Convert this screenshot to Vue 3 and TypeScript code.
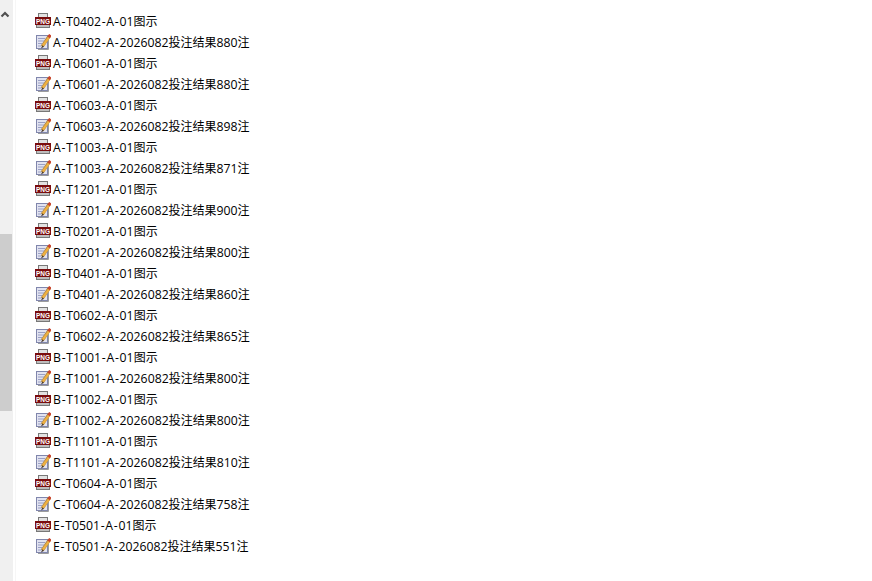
<script setup lang="ts">
interface FileRow {
  name: string
  kind: 'png' | 'txt'
}

interface NamePart {
  text: string
  cls: string
}

// code + count, each one gives an image row and a text row
const groups: [string, number][] = [
  ['A-T0402', 880],
  ['A-T0601', 880],
  ['A-T0603', 898],
  ['A-T1003', 871],
  ['A-T1201', 900],
  ['B-T0201', 800],
  ['B-T0401', 860],
  ['B-T0602', 865],
  ['B-T1001', 800],
  ['B-T1002', 800],
  ['B-T1101', 810],
  ['C-T0604', 758],
  ['E-T0501', 551]
]

const rows: FileRow[] = groups.flatMap(([code, count]): FileRow[] => [
  { name: `${code}-A-01图示`, kind: 'png' },
  { name: `${code}-A-2026082投注结果${count}注`, kind: 'txt' }
])

// hyphens and CJK runs need their own metrics to line up with the Explorer text
const splitName = (name: string): NamePart[] =>
  (name.match(/-|[\u4e00-\u9fff]+|[^-\u4e00-\u9fff]+/g) ?? []).map((text) => ({
    text,
    cls: text === '-' ? 'dash' : /[\u4e00-\u9fff]/.test(text) ? 'cjk' : 'latin'
  }))
</script>

<template>
  <div class="window">
    <div class="scrollbar">
      <div class="arrow">
        <svg width="13" height="17" viewBox="0 0 13 17">
          <path d="M1.5 10.5 L5 7 L8.5 10.5" fill="none" stroke="#505050" stroke-width="2.2" />
        </svg>
      </div>
      <div class="thumb"></div>
    </div>
    <ul class="list">
      <li v-for="row in rows" :key="row.name" class="row">
        <svg v-if="row.kind === 'png'" class="icon" width="16" height="16" viewBox="0 0 16 16">
          <rect x="3.5" y="0.5" width="9" height="5" fill="#e2e2e2" stroke="#787878" />
          <rect x="1.5" y="10.5" width="13" height="4" fill="#bdbdbd" stroke="#787878" />
          <rect x="0" y="4" width="16" height="8" fill="#7a0c0e" />
          <text x="8" y="10.8" class="png-label" text-anchor="middle" textLength="14" lengthAdjust="spacingAndGlyphs">PNG</text>
        </svg>
        <svg v-else class="icon" width="16" height="16" viewBox="0 0 16 16">
          <rect x="1.5" y="1.5" width="11" height="13" fill="#e2e3f0" stroke="#8086ac" />
          <path d="M13.5 3v12.5H3" fill="none" stroke="#9c9c9c" />
          <path d="M3 4.5h7M3 7h6M3 9.5h4M3 12h3" stroke="#9aa0c4" stroke-width="1" />
          <path d="M14.6 1.6 L7.2 12.4" stroke="#a8834a" stroke-width="3.4" />
          <path d="M14.6 2.4 L7.6 12" stroke="#eeb040" stroke-width="2.4" />
          <path d="M15.4 0.8 L13.6 3.4" stroke="#c9432c" stroke-width="3" />
          <path d="M7.4 11.2 L6 14.6 L9 12.8 Z" fill="#4a3c30" />
        </svg>
        <span class="name"><span v-for="(part, i) in splitName(row.name)" :key="i" :class="part.cls">{{ part.text }}</span></span>
      </li>
    </ul>
  </div>
</template>

<style scoped>
.window {
  display: flex;
  width: 872px;
  height: 581px;
  overflow: hidden;
  background: #fff;
  font-family: "Open Sans", "Noto Sans CJK SC", sans-serif;
}
.scrollbar {
  flex: none;
  width: 13px;
  height: 581px;
  background: #f0f0f0;
}
.arrow {
  height: 17px;
  margin-top: 6px;
}
.arrow svg {
  display: block;
}
.thumb {
  width: 12px;
  height: 177px;
  margin-top: 211px;
  background: #cdcdcd;
}
.list {
  list-style: none;
  margin: 0 0 0 2px;
  padding: 11px 0 0 19px;
  border-left: 1px solid #f6f6f6;
}
.row {
  display: flex;
  align-items: flex-start;
  gap: 2px;
  height: 21px;
  color: #000;
  white-space: nowrap;
}
.icon {
  flex: none;
  margin-top: 2px;
}
.name {
  font-size: 12.25px;
  line-height: 22px;
}
.dash {
  margin: 0 0.72px;
}
.cjk {
  font-size: 12px;
}
.png-label {
  font-family: "Liberation Sans", sans-serif;
  font-size: 7.5px;
  font-weight: 700;
  fill: #fff;
}
</style>

<style>
html,
body {
  margin: 0;
  background: #fff;
}
</style>
